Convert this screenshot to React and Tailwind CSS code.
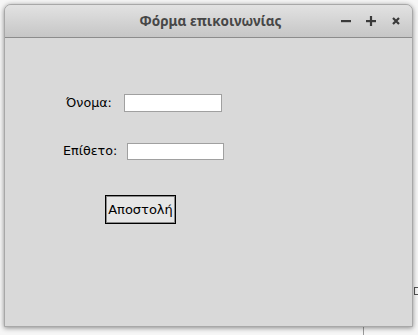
export default function App() {
  return (
    <div className="w-[418px] h-[335px] bg-[#f6f6f6] relative overflow-hidden" style={{ fontFamily: '"DejaVu Sans", sans-serif' }}>
      <div className="absolute left-[363px] top-[320px] w-px h-[15px] bg-[#9a9a9a]" />
      <div className="absolute left-[414px] top-[287px] w-[4px] h-[8px] border-l border-t border-b border-[#555]" />
      <div className="absolute left-[4px] top-[4px] w-[409px] h-[323px] rounded-t-[7px] border border-[#a8a8a8] bg-[#d9d9d9] shadow-[0_1px_5px_rgba(0,0,0,0.45)] flex flex-col overflow-hidden">
        <div className="h-[33px] shrink-0 bg-gradient-to-b from-[#e2e2e2] to-[#c6c6c6] border-b border-[#8c8c8c] relative flex items-center justify-center">
          <span className="text-[13.5px] font-bold text-[#474747] pl-[4px]" style={{ fontFamily: '"Noto Sans", sans-serif' }}>Φόρμα επικοινωνίας</span>
          <div className="absolute right-[10px] top-0 h-full flex items-center gap-[13px] text-[#3c3c3c]">
            <svg width="12" height="12" viewBox="0 0 12 12"><rect x="1" y="5" width="10" height="2.2" fill="#3a3a3a" /></svg>
            <svg width="12" height="12" viewBox="0 0 12 12"><rect x="1" y="5" width="10" height="2.2" fill="#3a3a3a" /><rect x="4.9" y="1" width="2.2" height="10" fill="#3a3a3a" /></svg>
            <svg width="12" height="12" viewBox="0 0 12 12"><path d="M3 3 L9 9 M9 3 L3 9" stroke="#3a3a3a" strokeWidth="2.2" /></svg>
          </div>
        </div>
        <div className="flex-1 text-[12px] text-black">
          <div className="flex items-center mt-[56px] h-[18px]">
            <span className="ml-[61px] w-[58px] text-[12.7px]">Όνομα:</span>
            <div className="w-[98px] h-[18px] bg-white border border-[#a0a0a0]" />
          </div>
          <div className="flex items-center mt-[30px] h-[18px]">
            <span className="ml-[58px] w-[64px] text-[12.7px]">Επίθετο:</span>
            <div className="w-[97px] h-[17px] bg-white border border-[#a0a0a0]" />
          </div>
          <div className="mt-[35px] ml-[100px]">
            <div className="w-[71px] h-[29px] border border-black bg-[#e6e6e6] flex items-center justify-center text-[13px]">
              <span className="border border-[#8a8a8a] w-full h-full flex items-center justify-center">Αποστολή</span>
            </div>
          </div>
        </div>
      </div>
    </div>
  );
}
